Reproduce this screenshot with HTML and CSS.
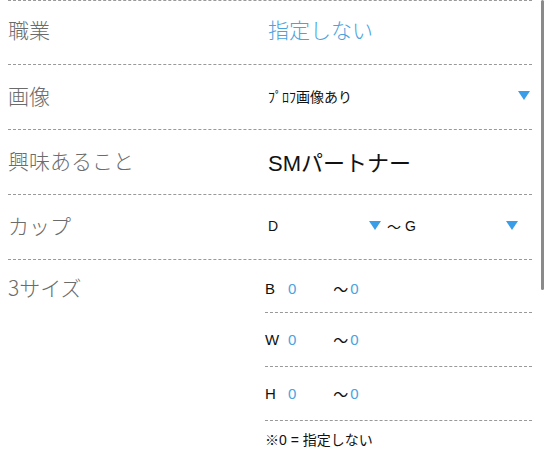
FILE: index.html
```
<!DOCTYPE html>
<html lang="ja">
<head>
<meta charset="utf-8">
<link rel="stylesheet" href="styles.css">
</head>
<body>
<div class="list">
  <div class="row first">
    <div class="label">職業</div>
    <div class="value link">指定しない</div>
  </div>
  <div class="row">
    <div class="label">画像</div>
    <div class="value select small"><span>ﾌﾟﾛﾌ画像あり</span><span class="arrow"></span></div>
  </div>
  <div class="row">
    <div class="label">興味あること</div>
    <div class="value big">SMパートナー</div>
  </div>
  <div class="row">
    <div class="label">カップ</div>
    <div class="value small cup">
      <div class="cup-sel"><span>D</span><span class="arrow"></span></div>
      <span class="tilde">〜</span>
      <div class="cup-sel second"><span>G</span><span class="arrow"></span></div>
    </div>
  </div>
  <div class="row sizes">
    <div class="label">3サイズ</div>
    <div class="size-list">
      <div class="size-row"><span class="k">B</span><span class="num">0</span><span class="tilde">〜</span><span class="num">0</span></div>
      <div class="size-row"><span class="k">W</span><span class="num">0</span><span class="tilde">〜</span><span class="num">0</span></div>
      <div class="size-row"><span class="k">H</span><span class="num">0</span><span class="tilde">〜</span><span class="num">0</span></div>
      <div class="note">※0 = 指定しない</div>
    </div>
  </div>
</div>
<div class="scrollbar"></div>
</body>
</html>
```
FILE: styles.css
```
html, body {
  margin: 0;
  padding: 0;
  background: #fff;
  overflow: hidden;
}
body {
  width: 548px;
  height: 457px;
  position: relative;
  font-family: "Liberation Sans", "Noto Sans CJK JP", sans-serif;
  color: #111;
}
.list {
  margin: 0 16px 0 8px;
  border-top: 1px dashed #999;
}
.row {
  display: flex;
  align-items: center;
  height: 65px;
  box-sizing: border-box;
  border-bottom: 1px dashed #999;
}
.row.first {
  height: 64px;
}
.label {
  width: 257px;
  flex: none;
  font-family: "Noto Sans CJK JP", sans-serif;
  font-size: 21px;
  color: #6b6b6b;
  font-weight: 300;
  padding-bottom: 4px;
}
.row.first .label,
.row.first .value {
  padding-bottom: 8px;
}
.value {
  flex: 1;
  padding-left: 3px;
  padding-bottom: 3px;
}
.link {
  font-family: "Noto Sans CJK JP", sans-serif;
  font-size: 21px;
  color: #4aa3de;
  font-weight: 300;
}
.big {
  font-size: 22px;
  font-family: "Liberation Sans", "Noto Sans CJK JP", sans-serif;
}
.small {
  font-size: 14px;
  font-family: "Liberation Sans", "Noto Sans CJK JP", sans-serif;
}
.select {
  display: flex;
  justify-content: space-between;
  align-items: center;
  padding-right: 2px;
}
.arrow {
  width: 0;
  height: 0;
  border-left: 6px solid transparent;
  border-right: 6px solid transparent;
  border-top: 9px solid #3a9de8;
}
.cup {
  display: flex;
  align-items: center;
  padding-right: 14px;
}
.cup-sel {
  display: flex;
  justify-content: space-between;
  align-items: center;
  width: 113px;
}
.cup-sel.second {
  flex: 1;
  width: auto;
}
.cup .tilde {
  margin: 0 4px 0 6px;
}
.sizes {
  align-items: flex-start;
  height: auto;
  border-bottom: none;
}
.sizes .label {
  padding-top: 12px;
}
.size-list {
  flex: 1;
  font-size: 15px;
}
.size-row {
  display: flex;
  align-items: center;
  height: 54px;
  box-sizing: border-box;
  border-bottom: 1px dashed #999;
  padding-left: 0;
}
.size-row:first-child {
  height: 53px;
  padding-top: 4px;
}
.size-row .k {
  width: 23px;
}
.size-row .num {
  color: #4aa3de;
}
.size-row .tilde {
  margin-left: 37px;
  margin-right: 2px;
}
.note {
  padding-top: 8px;
  font-size: 14px;
}
.scrollbar {
  position: absolute;
  left: 541px;
  top: 0;
  width: 3px;
  height: 290px;
  border-radius: 2px;
  background: #8a8a8a;
}
```
